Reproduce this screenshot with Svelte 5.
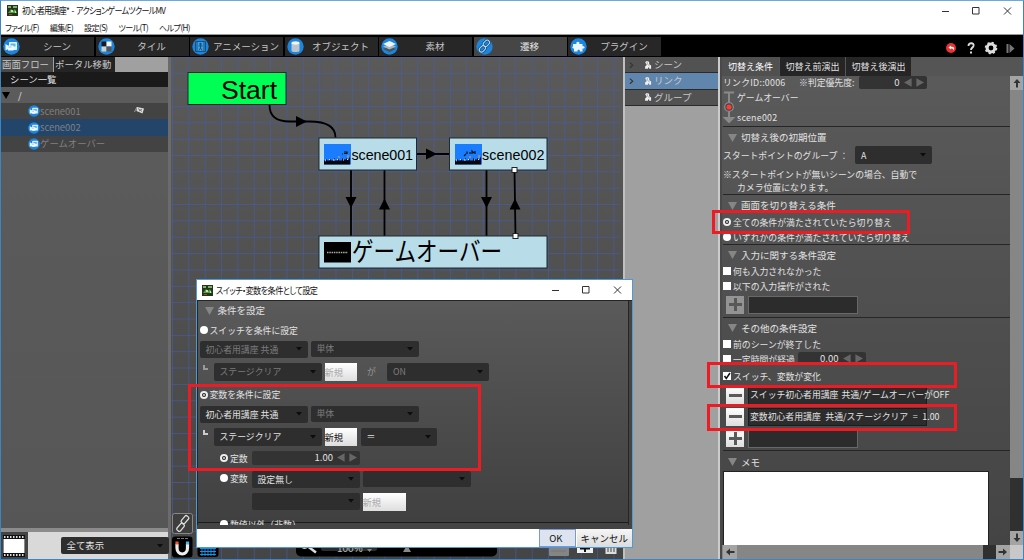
<script lang="ts">
  type Tool = { name: string; icon: string; active?: boolean }

  const menus = ['ファイル(F)', '編集(E)', '設定(S)', 'ツール(T)', 'ヘルプ(H)']
  const tools: Tool[] = [
    { name: 'シーン', icon: 'scene' },
    { name: 'タイル', icon: 'tile' },
    { name: 'アニメーション', icon: 'anim' },
    { name: 'オブジェクト', icon: 'object' },
    { name: '素材', icon: 'layers' },
    { name: '遷移', icon: 'link', active: true },
    { name: 'プラグイン', icon: 'plugin' },
  ]
  const scenes = ['scene001', 'scene002', 'ゲームオーバー']
  const categories = ['シーン', 'リンク', 'グループ']
  const tabs = ['切替え条件', '切替え前演出', '切替え後演出']

  let selectedScene = $state('scene002')
  let selectedCategory = $state('リンク')
  let activeTab = $state('切替え条件')

  const vLines = Array.from({ length: 28 }, (_, i) => 1.5 + i * 16.35)
  const hLines = Array.from({ length: 31 }, (_, i) => 0.4 + i * 16.35)
</script>

{#snippet appIcon()}
  <svg class="app-icon" viewBox="0 0 11 11">
    <rect width="11" height="11" fill="#26331f" />
    <path d="M1 1h3v2H1zM6 1h4v2H6z" fill="#7fb069" />
    <path d="M1 8l3-4 2 2 2-2 2 4z" fill="#3fae3c" />
    <path d="M4 5h2v2H4zM8 6h1v2H8z" fill="#e4d6a0" />
    <path d="M2 9h3v1H2z" fill="#c23a2b" />
  </svg>
{/snippet}

{#snippet windowButtons()}
  <svg class="win-btns" viewBox="0 0 72 8">
    <path d="M0 4.500h7M30.500 .5h6.500v6.500h-6.500zM62 .5l7 7M69 .5l-7 7" fill="none" stroke="#333" />
  </svg>
{/snippet}

{#snippet toolIcon(kind: string)}
  <svg class="tool-icon" viewBox="0 0 17 17">
    <circle cx="8.500" cy="8.500" r="8.200" fill="#1b86e0" />
    {#if kind === 'scene'}
      <rect x="6" y="4" width="8" height="8" rx=".8" fill="#e4f2fb" />
      <path d="M7.500 5.500h5v3h-5z" fill="#5db4ec" />
      <path d="M2.500 6l2.500 1.500h5.500v5h-5.500v-1.200l-2.500 1z" fill="#f3f9fd" />
      <path d="M5.500 9h3" stroke="#8ccaf0" />
    {:else if kind === 'tile'}
      <path d="M3.500 3.500h5v5h-5z" fill="#1a1a1a" />
      <path d="M8.500 3.500h5v5h-5z" fill="#f4f4f4" />
      <path d="M3.500 8.500h5v5h-5z" fill="#d0d0d0" />
      <path d="M8.500 8.500h5v5h-5z" fill="#555" />
    {:else if kind === 'anim'}
      <path d="M3.500 3.500h10v10h-10zM5 4v9M12 4v9" fill="#3aa0e8" stroke="#174f7d" />
      <circle cx="8.500" cy="6" r="1.200" fill="#174f7d" />
      <path d="M6.500 8h4M8.500 7v3l-1.500 2.500M8.500 10l1.500 2.500" fill="none" stroke="#174f7d" />
    {:else if kind === 'object'}
      <path d="M4.500 5v7.500c0 2 8 2 8 0V5z" fill="#bcc4c9" />
      <ellipse cx="8.500" cy="5" rx="4" ry="1.700" fill="#eef2f4" />
    {:else if kind === 'layers'}
      <path d="M2 11l6.500-2.500L15 11l-6.500 3z" fill="#48545d" />
      <path d="M2 8.500L8.500 6 15 8.500l-6.500 3z" fill="#aab7bf" />
      <path d="M2 6l6.500-3L15 6 8.500 9z" fill="#edf5fa" />
    {:else if kind === 'link'}
      <g fill="none" stroke="#174b75" stroke-width="2.500">
        <rect x="7" y="3" width="7" height="4.600" rx="2.300" transform="rotate(-45 10.500 5.500)" />
        <rect x="3" y="8.500" width="7" height="4.600" rx="2.300" transform="rotate(-45 6.500 11)" />
      </g>
      <g fill="none" stroke="#b5dcf5" stroke-width="1">
        <rect x="7" y="3" width="7" height="4.600" rx="2.300" transform="rotate(-45 10.500 5.500)" />
        <rect x="3" y="8.500" width="7" height="4.600" rx="2.300" transform="rotate(-45 6.500 11)" />
      </g>
    {:else}
      <path d="M3 6h3.500c-1.200-3 4-3 2.800 0h3.200v2.300c2.800-1 2.800 3 0 2.200V13.500H9.800c.8-2.300-3-2.300-2.300 0H4v-3c-2 .5-2-2-1-2z" fill="#eaf4fb" />
    {/if}
  </svg>
{/snippet}

{#snippet select(text: string, cls: string)}
  <div class="select {cls}">
    <span>{text}</span>
    <svg viewBox="0 0 6 4"><path d="M0 0h6L3 3.500z" fill="currentColor" /></svg>
  </div>
{/snippet}

{#snippet spin(value: string, cls: string)}
  <div class="spin {cls}">
    <b>{value}</b>
    <svg viewBox="0 0 21 9"><path d="M8 0v9L0 4.500zM13 0v9l8-4.500z" fill="#666" /></svg>
  </div>
{/snippet}

{#snippet radio(text: string, on: boolean)}
  <label class="choice"><i class="radio" class:on></i><span>{text}</span></label>
{/snippet}

{#snippet check(text: string, on: boolean)}
  <label class="choice">
    <i class="check">
      {#if on}<svg viewBox="0 0 8 8"><path d="M1.500 4l1.800 2.500L7 1" fill="none" stroke="#111" stroke-width="1.500" /></svg>{/if}
    </i>
    <span>{text}</span>
  </label>
{/snippet}

{#snippet heading(text: string)}
  <div class="heading">
    <svg viewBox="0 0 9 8"><path d="M0 0h9L4.500 8z" fill="#868686" /></svg>
    <span>{text}</span>
  </div>
{/snippet}

{#snippet item(text: string, sign: string, cls: string)}
  <div class="item {cls}">
    <button aria-label={sign}>
      <svg viewBox="0 0 13 13"><path d={sign === 'plus' ? 'M0 6.500h13M6.500 0v13' : 'M0 6.500h13'} stroke="#5a5a5a" stroke-width="3" /></svg>
    </button>
    <div class="field"><span>{text}</span></div>
  </div>
{/snippet}

{#snippet arrow(dir: string)}
  <svg class="arrow {dir}" viewBox="0 0 14 14">
    <path d="M7 3l3.500 4H8v4.500H6V7H3.500z" fill="#333" />
  </svg>
{/snippet}

{#snippet thumb(x: number, y: number)}
  <rect {x} {y} width="27" height="20.500" fill="#1a7dff" />
  <path transform="translate({x} {y})" d="M0 20.500v-4h1v1h1v-2h1v1h3v-1h1v1h3v-2h1v2h3v-1h1v1h3v-2h1v1h3v-1h1v1h2v-2h1v7z" fill="#05070c" />
  <path transform="translate({x} {y})" d="M1 16h1M5 15.500h1M9 16h2M13 15.500h1M19 16h1M23 15.500h1" stroke="#d8e8f8" />
  <path transform="translate({x} {y})" d="M15 14v-2M24 14v-3" stroke="#e3a14a" />
{/snippet}

<div class="window">
  <header class="titlebar">
    <div class="title">{@render appIcon()}<span>初心者用講座* - アクションゲームツクールMV</span></div>
    {@render windowButtons()}
  </header>
  <nav class="menu">
    <div>
      {#each menus as menu}<span>{menu}</span>{/each}
    </div>
  </nav>

  <div class="toolbar">
    {#each tools as tool}
      <button class="tool" class:active={tool.active}>
        {@render toolIcon(tool.icon)}<span>{tool.name}</span>
      </button>
    {/each}
    <svg class="actions" viewBox="0 0 72 14">
      <circle cx="6" cy="7" r="5" fill="#ee3030" />
      <path d="M3.500 6.500l2.500-2v1.200c3 0 4 1.500 2.500 3.800.2-1.600-.7-2-2.500-2v1z" fill="#fff" />
      <path d="M23.500 5c0-4 6-3.500 5 0-.5 1.500-2.500 1.800-2.500 4" fill="none" stroke="#ddd" stroke-width="1.900" />
      <rect x="25" y="10.500" width="2" height="2" fill="#ddd" />
      <circle cx="46" cy="7" r="3.900" fill="none" stroke="#ddd" stroke-width="3" />
      <circle cx="46" cy="7" r="5.300" fill="none" stroke="#ddd" stroke-width="2" stroke-dasharray="2.100 2.060" />
      <path d="M61.500 3h2v9h-2zM64.500 3l5 4.500-5 4.500z" fill="#777" />
    </svg>
  </div>

  <main>
    <aside class="tree">
      <div class="tree-tabs"><span class="on">画面フロー</span><span>ポータル移動</span></div>
      <div class="tree-head">シーン一覧</div>
      <div class="tree-root">
        <svg viewBox="0 0 8 7"><path d="M0 0h8L4 7z" fill="#000" /></svg><span>/</span>
      </div>
      {#each scenes as scene, i}
        <button class="tree-row" class:selected={scene === selectedScene} onclick={() => (selectedScene = scene)}>
          {@render toolIcon('scene')}<span>{scene}</span>
          {#if i === 0}
            <svg class="flag" viewBox="0 0 10 9"><path d="M.5 6L3 1" stroke="#999" /><path d="M3 1l7 1.500-1.500 5-6-2.500z" fill="#ddd" /><path d="M4 2.500l4 3M5 5l3-2" stroke="#777" /></svg>
          {/if}
        </button>
      {/each}
      <div class="tree-fill"></div>
      <div class="tree-foot">
        <svg viewBox="0 0 27 28">
          <rect width="27" height="28" fill="#444" />
          <rect x="2" y="3" width="22" height="22" fill="#111" />
          <rect x="2.500" y="7" width="21" height="14" fill="#fff" />
          <path d="M3 5h21M3 23h21" stroke="#ddd" stroke-width="2" stroke-dasharray="1.500 1.500" />
        </svg>
        {@render select('全て表示', 'w109')}
      </div>
    </aside>

    <section class="canvas">
      <svg class="graph" viewBox="0 0 452 502">
        <g stroke="#4860a8" stroke-width="0.800" opacity="0.750">
          {#each vLines as x}<path d="M{x} 0V502" />{/each}
          {#each hLines as y}<path d="M0 {y}H449" />{/each}
        </g>
        <g fill="none" stroke="#000" stroke-width="1.800">
          <path d="M98.500 48c0 12 8 16.500 20 16.500h20c16 0 26 4 26 16" />
          <path d="M245 97h33M180 113v66M213.500 113v66M315.500 113v66M343.500 113l1 66" />
        </g>
        <path d="M125 59v11l11-5.500zM255 91.500v11l11-5.500zM174.500 140h11l-5.500 11zM208 152.500h11l-5.500-11zM310 140h11l-5.500 11zM338.500 152.500h11l-5.500-11z" />
        <g stroke="#1d2a33" stroke-width="1">
          <rect x="17" y="15.500" width="98" height="32" fill="#00ff55" />
          <rect x="148" y="81" width="97.500" height="32" fill="#b8dde8" />
          <rect x="278.500" y="81" width="97.500" height="32" fill="#b8dde8" />
          <rect x="148" y="179" width="228" height="32" fill="#b8dde8" />
        </g>
        {@render thumb(153, 87)}
        {@render thumb(284, 87)}
        <path d="M171 97h1M173 95h3v1.500h-3M293 99l2-2M296 97v-2.500M299 97v-2M301 97v-3l2 2M304 97v-3" stroke="#111" fill="none" stroke-width="1.200" />
        <rect x="153" y="185" width="27" height="20.500" />
        <path d="M156 195.500h21" stroke="#aaa" stroke-width="1.500" stroke-dasharray="1.500 .8" />
        <text x="50" y="41.500" font-size="25" textLength="56" lengthAdjust="spacingAndGlyphs">Start</text>
        <text x="180.500" y="102.500" font-size="14.300" textLength="61.500">scene001</text>
        <text x="311" y="102.500" font-size="14.300" textLength="62.500">scene002</text>
        <text x="181" y="204" font-size="26" textLength="150" lengthAdjust="spacingAndGlyphs">ゲームオーバー</text>
        <g fill="#fff" stroke="#222">
          <rect x="341" y="110.500" width="5" height="5" />
          <rect x="342" y="176.500" width="5" height="5" />
        </g>
        <!-- link, snap and grid buttons -->
        <rect x="1.500" y="456.500" width="20" height="20" rx="2" fill="#3e3e3e" stroke="#888" />
        <g fill="none" stroke="#ddd" stroke-width="1.300">
          <rect x="10" y="460.500" width="8.500" height="4.500" rx="1.500" transform="rotate(-50 14 463)" />
          <rect x="5" y="468" width="8.500" height="4.500" rx="1.500" transform="rotate(-50 9.500 470)" />
        </g>
        <rect x="1" y="479.500" width="20.500" height="21" rx="3" />
        <path d="M6 487v4c0 8 10.500 8 10.500 0v-4" fill="none" stroke="#eee" stroke-width="3.200" />
        <path d="M4.400 484.500h3.200v3H4.400z" fill="#f0582a" />
        <path d="M14.900 484.500h3.200v3h-3.200z" fill="#4cb2f0" />
        <path d="M6 481.500h11" stroke="#777" stroke-dasharray="3 1" />
        <rect x="26.500" y="478" width="21" height="22" rx="3" />
        <path d="M29 491.500h16M29 494.500h16M29 497.500h16M31 488v11M34 488v11M37 488v11M40 488v11M43 488v11" stroke="#1492e6" />
        <rect x="125" y="476" width="201" height="23.500" rx="5" />
        <rect x="150" y="478" width="56" height="16" rx="2" fill="#2c2c2c" />
        <path d="M137 489.500l8 6" stroke="#ddd" stroke-width="2.500" />
        <circle cx="133.500" cy="487" r="4" fill="none" stroke="#ddd" stroke-width="2" />
        <text x="166" y="495" font-size="10" class="zoom">100%</text>
        <path d="M196 492h5l-2.500 3zM232 495h8l-4-7z" fill="#888" />
        <rect x="378" y="482" width="20" height="17" rx="1" fill="#858585" />
        <path d="M380 494h15" stroke="#777" />
        <rect x="406" y="482" width="16" height="14" fill="#f0f0f0" />
        <path d="M414 486v9M409 491.500h10" stroke="#111" stroke-width="2" />
        <rect x="434.500" y="484" width="11" height="13" fill="#ddd" />
        <path d="M437 485v10M440 485v10M443 485v10" stroke="#444" />
      </svg>
    </section>

    <aside class="categories">
      {#each categories as category, i}
        <button class:selected={category === selectedCategory} onclick={() => (selectedCategory = category)}>
          <svg viewBox="0 0 30 14">
            {#if i < 2}<path d="M5 4.500l3 2.700-3 2.700" fill="none" stroke="#333" stroke-width="1.200" />{/if}
            <path d="M21 4.500c0-2 4-2 4 0v1.800l2 1.200v3.500h-2V9.500h-1.200V11h-3V8.500l1.700-1.500z" fill="#f0f0f0" />
            <path d="M23 4v2l2.500 2" fill="none" stroke="#777" stroke-width=".6" />
          </svg>
          <span>{category}</span>
        </button>
      {/each}
    </aside>

    <aside class="props">
      <div class="prop-tabs">
        {#each tabs as tab}
          <button class:on={tab === activeTab} onclick={() => (activeTab = tab)}>{tab}</button>
        {/each}
      </div>
      <div class="prop-body">
        <div class="link-id">
          <span class="id">リンクID::0006</span><span class="priority">※判定優先度:</span>{@render spin('0', 'w68')}
        </div>
        <div class="route">
          <svg viewBox="0 0 13 32">
            <path d="M1 1.500h10M6 1v27M2 27l4 4 4-4z" stroke="#8a8a8a" stroke-width="2" fill="#8a8a8a" />
            <circle cx="6" cy="16" r="4.300" fill="#444" stroke="#8a8a8a" stroke-width="1.300" />
            <circle cx="6" cy="16" r="2.600" fill="#ff3a35" />
          </svg>
          <div><span>ゲームオーバー</span><span class="id">scene002</span></div>
        </div>
        <section class="group start">
          {@render heading('切替え後の初期位置')}
          <div class="start-row"><span>スタートポイントのグループ ：</span>{@render select('A', 'w77')}</div>
          <p>※スタートポイントが無いシーンの場合、自動で</p>
          <p class="indent">カメラ位置になります。</p>
        </section>
        <section class="group mode">
          {@render heading('画面を切り替える条件')}
          {@render radio('全ての条件が満たされていたら切り替え', true)}
          {@render radio('いずれかの条件が満たされていたら切り替え', false)}
        </section>
        <section class="group input">
          {@render heading('入力に関する条件設定')}
          {@render check('何も入力されなかった', false)}
          {@render check('以下の入力操作がされた', false)}
          {@render item('', 'plus', 'disabled')}
        </section>
        <section class="group other">
          {@render heading('その他の条件設定')}
          {@render check('前のシーンが終了した', false)}
          <div class="elapsed">{@render check('一定時間が経過', false)}{@render spin('0.00', 'w68')}</div>
          {@render check('スイッチ、変数が変化', true)}
          {@render item('スイッチ初心者用講座 共通/ゲームオーバーがOFF', 'minus', 'wide')}
          {@render item('変数初心者用講座 共通/ステージクリア = 1.00', 'minus', 'wide loose')}
          {@render item('', 'plus', '')}
        </section>
        <section class="group memo">
          {@render heading('メモ')}
          <div class="memo-box"></div>
        </section>
      </div>
      <div class="vscroll">{@render arrow('up')}<div class="track"></div><div class="knob"></div>{@render arrow('down')}</div>
      <div class="hscroll">{@render arrow('left')}<div class="track"></div><div class="knob"></div>{@render arrow('right')}</div>
    </aside>
  </main>

  <div class="dialog">
    <header>
      <div class="title">{@render appIcon()}<span>スイッチ・変数を条件として設定</span></div>
      {@render windowButtons()}
    </header>
    <div class="dialog-body">
      {@render heading('条件を設定')}
      {@render radio('スイッチを条件に設定', false)}
      <div class="line dim">{@render select('初心者用講座 共通', 'w109')}{@render select('単体', 'w109 low')}</div>
      <div class="line nested dim">
        <i class="elbow"></i>{@render select('ステージクリア', 'w109')}<button class="new">新規</button>
        <span class="ga">が</span>{@render select('ON', 'w102')}
      </div>
      {@render radio('変数を条件に設定', true)}
      <div class="line">{@render select('初心者用講座 共通', 'w109')}{@render select('単体', 'w109 low dim')}</div>
      <div class="line nested">
        <i class="elbow"></i>{@render select('ステージクリア', 'w109')}<button class="new">新規</button>{@render select('＝', 'w76')}
      </div>
      <div class="line value">{@render radio('定数', true)}{@render spin('1.00', 'w109')}</div>
      <div class="line value">{@render radio('変数', false)}{@render select('設定無し', 'w109')}{@render select('', 'w109 low dim')}</div>
      <div class="line value last dim">{@render select('', 'w109')}<button class="new big">新規</button></div>
      <div class="line value cut">{@render radio('数値以外（非数）', false)}</div>
    </div>
    <footer><button class="ok">OK</button><button>キャンセル</button></footer>
  </div>

  <div class="mark all"></div>
  <div class="mark changed"></div>
  <div class="mark cleared"></div>
  <div class="mark variable"></div>
</div>

<style>
  :global(body) { margin: 0; background: #000; }
  .window { position: relative; box-sizing: border-box; width: 1024px; height: 560px; display: flex; flex-direction: column; overflow: hidden; border: 1px solid #3d85c2; border-top-color: #6aa9e2; background: #fff; color: #e2e2e2; font-family: "Noto Sans CJK JP", sans-serif; font-size: 8.85px; line-height: 13px; white-space: nowrap; }
  button { border: 0; padding: 0; margin: 0; font: inherit; color: inherit; background: none; }
  svg { display: block; flex: none; }
  i { flex: none; }
  b { font-weight: normal; }
  p { margin: 0; }

  .titlebar { display: flex; justify-content: space-between; align-items: center; height: 19px; padding: 0 9px 0 6px; color: #111; }
  .title { display: flex; align-items: center; gap: 4px; font-feature-settings: "palt"; }
  .titlebar .title span { font-size: 9.2px; letter-spacing: -0.8px; word-spacing: 1.5px; transform: scaleX(0.875); transform-origin: left; }
  .app-icon { width: 11px; height: 11px; }
  .win-btns { width: 72px; height: 8px; }
  .menu { height: 15px; padding-left: 4px; color: #111; font-size: 8.5px; font-feature-settings: "palt"; letter-spacing: -0.6px; line-height: 15px; box-sizing: border-box; border-bottom: 1px solid #999; }
  .menu div { display: flex; gap: 11.500px; transform: scaleX(0.947); transform-origin: left; }

  .toolbar { display: flex; align-items: center; gap: 1.5px; height: 22px; background: #000; }
  .tool { display: flex; align-items: center; width: 93px; height: 19px; padding-left: 2px; box-sizing: border-box; background: #272727; font-size: 9.5px; color: #c4c4c4; }
  .tool.active { background: #464646; color: #e4e4e4; }
  .tool span { flex: 1; text-align: center; }
  .tool-icon { width: 17px; height: 17px; }
  .actions { width: 72px; height: 14px; margin: 3px 6px 0 auto; }

  main { flex: 1; display: grid; grid-template-columns: 170px 452px 97px 1fr; min-height: 0; }

  .tree { display: flex; flex-direction: column; border-right: 3px solid #6b6b6b; background: linear-gradient(#5c5c5c, #565656); font-size: 9.4px; min-width: 0; }
  .tree-tabs { display: flex; gap: 1px; height: 15px; line-height: 15px; background: #a0a0a0; color: #c8c8c8; }
  .tree-tabs span { width: 61px; padding-left: 1px; box-sizing: border-box; background: #242424; }
  .tree-tabs .on { width: 52px; background: #484848; }
  .tree-head { height: 15px; padding-left: 9px; line-height: 15px; background: #1a1a1a; }
  .tree-root { display: flex; align-items: center; gap: 8px; height: 16px; padding-left: 1px; }
  .tree-root svg { width: 8px; height: 7px; }
  .tree-row { display: flex; align-items: center; height: 16.4px; padding: 0 24px 0 27px; background: #434343; color: #808080; }
  .tree-row.selected { background: #23456a; }
  .tree-row .tool-icon { width: 12px; height: 12px; }
  .flag { width: 10px; height: 9px; margin: -2px 0 0 auto; }
  .tree-fill { flex: 1; }
  .tree-foot { display: flex; justify-content: space-between; align-items: center; height: 27px; border-top: 4px solid #8b8b8b; background: #d9d9d9; }
  .tree-foot > svg { width: 27px; height: 28px; }
  .tree-foot .select { margin-right: -1px; }

  .canvas { background: linear-gradient(#5a5a5a, #4f4f4f 50%, #454545); min-width: 0; overflow: hidden; }
  .graph { width: 452px; height: 502px; font-family: "Liberation Sans", "Noto Sans CJK JP", sans-serif; }
  .zoom { fill: #bbb; }

  .categories { border-left: 2px solid #c0c0c0; border-right: 2px solid #ccc; background: #a0a0a0; box-sizing: border-box; }
  .categories button { display: flex; align-items: center; width: 100%; height: 16.3px; background: #525252; border-bottom: 1.500px solid #2a2a2a; color: #c8c8c8; font-size: 9.5px; }
  .categories button.selected { background: #6086ae; }
  .categories svg { width: 29px; height: 14px; }

  .props { display: grid; grid-template: 19px 1fr 14px / 288px 1fr; background: #555; border-left: 2px solid #494949; min-height: 0; }
  .prop-tabs { grid-column: 1 / 3; display: flex; gap: 1px; }
  .prop-tabs button { width: 65px; background: #252525; font-size: 9px; line-height: 18px; }
  .prop-tabs .on { width: 57px; background: #505050; color: #fff; }
  .prop-body { padding-left: 1px; min-height: 0; overflow: hidden; background: linear-gradient(#5a5a5a, #444); }
  .id { letter-spacing: 0.25px; }
  .link-id { display: flex; height: 13px; }
  .link-id .id { width: 76px; }
  .priority { width: 59.500px; }
  .link-id .spin { height: 13px; }
  .route { display: flex; align-items: center; height: 36.500px; }
  .route svg { width: 13px; height: 32px; }
  .route div { display: flex; flex-direction: column; gap: 7px; padding: 1px 0 0 1px; }
  .group { border-top: 1px solid #262626; box-sizing: border-box; }
  .heading { display: flex; align-items: center; gap: 4px; height: 18px; padding: 2px 0 0 5px; box-sizing: border-box; font-size: 9.5px; }
  .heading svg { width: 9px; height: 8px; }
  .start { height: 68px; }
  .start .heading { height: 20px; }
  .start-row { display: flex; align-items: center; height: 17px; margin-bottom: 4px; }
  .start-row > span { width: 132px; }
  .indent { padding-left: 14px; }
  .mode { height: 50px; }
  .mode .heading { height: 20px; }
  .choice { display: flex; align-items: center; gap: 2px; height: 15px; }
  .radio { box-sizing: border-box; width: 8px; height: 8px; border-radius: 50%; background: #fff; }
  .radio.on { border: 2px solid #eee; background: #222; }
  .radio.on::after { content: ''; display: block; width: 2px; height: 2px; margin: 1px; border-radius: 50%; background: #ddd; }
  .check { width: 8px; height: 8px; background: #fff; }
  .check svg { width: 8px; height: 8px; }
  .input { height: 73px; }
  .input .heading { height: 19px; }
  .other { height: 133.5px; }
  .other .heading { height: 19px; }
  .elapsed { display: flex; gap: 2px; height: 15px; width: 142.500px; justify-content: space-between; }
  .elapsed .spin { height: 13px; }
  .other > .choice:nth-child(4) { height: 19.500px; }
  .item { display: flex; gap: 4px; height: 19px; margin-bottom: 2.6px; padding-left: 3px; }
  .input .item { margin-top: 2px; }
  .item button { width: 18px; height: 18px; padding: 2.5px; box-sizing: border-box; background: linear-gradient(#fff, #dedede); }
  .item button svg { width: 13px; height: 13px; }
  .item.disabled button { background: #a0a0a0; opacity: 0.85; }
  .item .field { width: 110px; box-sizing: border-box; height: 18.500px; padding-left: 1px; border: 1px solid #686868; background: #2c2c2c; line-height: 16px; }
  .item.wide .field { width: 179px; border-color: #1c1c1c; word-spacing: 1px; }
  .item.loose .field { word-spacing: 2.600px; }
  .memo .heading { height: 20px; }
  .memo-box { width: 266px; height: 76px; box-sizing: border-box; border: 1px solid #222; background: #fff; }
  .vscroll { display: flex; flex-direction: column; background: #868686; }
  .vscroll .track, .hscroll .track { flex: 1; }
  .vscroll .knob { height: 53px; background: #303030; }
  .hscroll { grid-column: 1 / 3; display: flex; padding: 0 14px 0 1px; background: linear-gradient(to right, #868686 287px, #c8c8c8 287px); }
  .hscroll .knob { width: 13px; background: #303030; }
  .arrow { width: 14px; height: 14px; background: #a4a4a4; }
  .arrow.down { transform: rotate(180deg); }
  .arrow.left { transform: rotate(-90deg); }
  .arrow.right { transform: rotate(90deg); }

  .select { display: flex; flex: none; justify-content: space-between; align-items: center; height: 17.500px; padding: 0 6px; box-sizing: border-box; border-radius: 2px; background: #2e2e2e; }
  .select svg { width: 6px; height: 4px; color: #0c0c0c; }
  .select.low { height: 16.500px; }
  .spin { display: flex; flex: none; justify-content: flex-end; align-items: center; gap: 4px; box-sizing: border-box; padding-right: 3px; border-radius: 2px; background: #333; font-size: 9.5px; }
  .spin svg { width: 20px; height: 9px; }
  .w68 { width: 68px; }
  .w76 { width: 76px; }
  .w77 { width: 77px; }
  .w102 { width: 102px; }
  .w109 { width: 108.500px; }

  .dialog { position: absolute; left: 195px; top: 278px; width: 437px; height: 269px; box-sizing: border-box; display: flex; flex-direction: column; border: 1px solid #4f9ad6; background: #444; }
  .dialog header { display: flex; justify-content: space-between; align-items: center; height: 20px; padding: 0 8px 0 5px; background: #fff; color: #111; }
  .dialog header .title { gap: 3px; }
  .dialog header .title span { font-size: 9px; letter-spacing: -0.6px; transform: scaleX(0.9); transform-origin: left; }
  .dialog-body { height: 225px; padding: 0 0 0 1.500px; overflow: hidden; box-sizing: border-box; border-top: 1px solid #252525; border-left: 1px solid #262626; background: linear-gradient(to right, transparent 430px, #252525 430px 431px, #444 431px), linear-gradient(#5a5a5a, #404040 221px, #1c1c1c 221px 222px, #444 222px); }
  .dialog-body .heading { height: 19px; padding: 0 0 0 5px; }
  .dialog-body > .choice { height: 20.500px; }
  .line { display: flex; align-items: flex-start; gap: 2.500px; height: 22.500px; }
  .dialog-body > .choice:nth-child(5) { height: 22px; margin-top: -2px; }
  .line.nested { padding-left: 1px; }
  .elbow { width: 5px; height: 5px; margin: 1.500px 3.500px 0 2px; box-sizing: border-box; border: solid #ccc; border-width: 0 0 2px 2px; }
  .dim, .dim .select { color: #7c7c7c; }
  .dim .elbow { border-color: #999; }
  .new { width: 32.500px; height: 18px; background: linear-gradient(#fff, #dedede); color: #111; text-align: left; font-size: 9.3px; line-height: 18px; }
  .dim .new { color: #aaa; }
  .new.big { width: 43.500px; }
  .nested .select:last-child { margin-left: 1px; }
  .ga { width: 24px; text-align: center; line-height: 18px; color: #999; }
  .value { height: 20px; padding-left: 20.500px; }
  .value .choice { width: 29px; }
  .value .spin { height: 14px; }
  .last { padding-left: 52px; height: 24px; margin-top: 2px; }
  .dialog footer { display: flex; justify-content: flex-end; gap: 1px; height: 18px; margin-top: auto; background: #fff; color: #111; }
  .dialog footer button { width: 55.500px; background: linear-gradient(#f6f6f6, #dcdcdc); font-size: 9.5px; }
  .dialog footer .ok { width: 36.500px; padding-right: 3px; box-sizing: border-box; border: 1px solid #8098c8; background: #dde3ef; }

  .mark { position: absolute; box-sizing: border-box; border: 3.500px solid #ed1c24; }
  .all { left: 711px; top: 208.500px; width: 198px; height: 24.500px; }
  .changed { left: 706px; top: 360.500px; width: 250px; height: 26px; }
  .cleared { left: 706px; top: 403px; width: 250px; height: 27px; }
  .variable { left: 187px; top: 383px; width: 293px; height: 87px; }
</style>
